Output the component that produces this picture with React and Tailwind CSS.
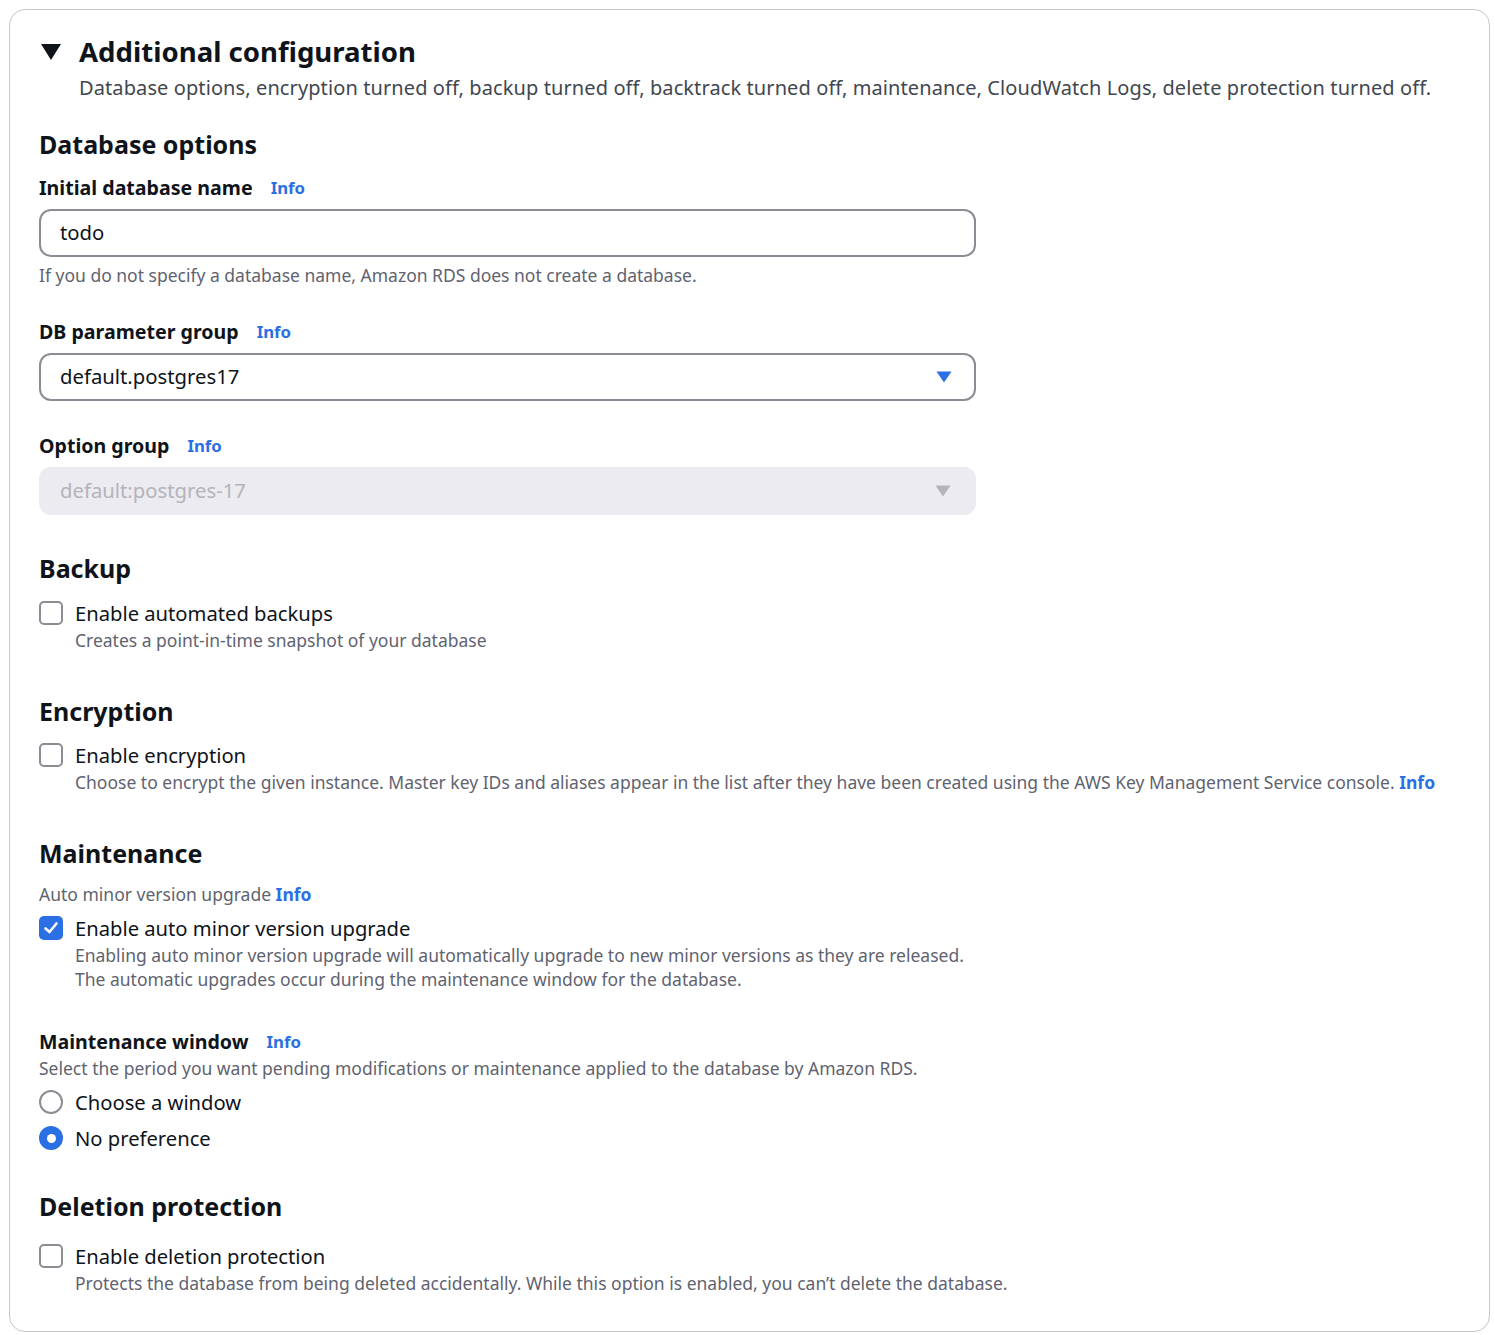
import React from "react";

const F = { fontFamily: '"Noto Sans", "Open Sans", sans-serif' };

function Info() {
  return <span className="text-[#2a6fe3] font-bold text-[16.8px]">Info</span>;
}

function Label({ children, top }) {
  return (
    <div className={`flex items-center gap-[18px] h-[28px] text-[19.6px] font-bold text-[#0f141a] ${top}`}>
      <span>{children}</span>
      <Info />
    </div>
  );
}

function SectionTitle({ children, top }) {
  return <div className={`h-[32px] leading-[32px] text-[25px] font-bold text-[#0f141a] ${top}`}>{children}</div>;
}

function Caret({ color }) {
  return (
    <svg width="16" height="12" viewBox="0 0 16 12">
      <path d="M0.5 0.5 H15.5 L8 11.5 Z" fill={color} />
    </svg>
  );
}

function Checkbox({ checked }) {
  if (checked) {
    return (
      <span className="w-[24px] h-[24px] rounded-[5px] bg-[#2a6fe3] flex items-center justify-center shrink-0">
        <svg width="16" height="14" viewBox="0 0 16 14">
          <path d="M2.5 7.5 L6.5 11 L13.5 2.5" stroke="white" strokeWidth="2.6" fill="none" strokeLinecap="round" strokeLinejoin="round" />
        </svg>
      </span>
    );
  }
  return <span className="w-[24px] h-[24px] rounded-[5px] border-2 border-[#8c8c94] bg-white shrink-0" />;
}

function Radio({ checked }) {
  if (checked) {
    return (
      <span className="w-[24px] h-[24px] rounded-full bg-[#2a6fe3] flex items-center justify-center shrink-0">
        <span className="w-[9px] h-[9px] rounded-full bg-white" />
      </span>
    );
  }
  return <span className="w-[24px] h-[24px] rounded-full border-2 border-[#8c8c94] bg-white shrink-0" />;
}

function CheckRow({ checked, label, top }) {
  return (
    <div className={`flex items-center gap-[12px] h-[28px] ${top}`}>
      <Checkbox checked={checked} />
      <span className="text-[20.2px] text-[#0f141a] leading-[28px]">{label}</span>
    </div>
  );
}

function Desc({ children, top, indent }) {
  return (
    <div className={`text-[17.5px] leading-[24px] text-[#5f6370] ${indent ? "pl-[36px]" : ""} ${top}`}>{children}</div>
  );
}

export default function App() {
  return (
    <div className="bg-white w-[1495px] h-[1335px] pt-[9px] pl-[9px]" style={F}>
      <div className="w-[1481px] h-[1323px] border border-[#c6c6cd] rounded-[16px] pl-[29px] pr-[20px]">
        <div className="flex items-center h-[36px] mt-[23px]">
          <span className="ml-[2px] mr-[18px] mt-[1px]">
            <svg width="20" height="16" viewBox="0 0 20 16">
              <path d="M0 0 H20 L10 16 Z" fill="#0f141a" />
            </svg>
          </span>
          <span className="text-[27.6px] font-bold text-[#0f141a] leading-[36px]">Additional configuration</span>
        </div>
        <div className="pl-[40px] mt-[5px] text-[20px] tracking-[0.1px] leading-[28px] text-[#414750]">
          Database options, encryption turned off, backup turned off, backtrack turned off, maintenance, CloudWatch Logs, delete protection turned off.
        </div>

        <SectionTitle top="mt-[26px]">Database options</SectionTitle>
        <Label top="mt-[14px]">Initial database name</Label>
        <div className="mt-[7px] w-[937px] h-[48px] border-[2.5px] border-[#8c8c94] rounded-[12px] flex items-center pl-[19px] pb-[1px] text-[20.3px] text-[#0f141a]">
          todo
        </div>
        <Desc top="mt-[6px]">If you do not specify a database name, Amazon RDS does not create a database.</Desc>

        <Label top="mt-[31px]">DB parameter group</Label>
        <div className="mt-[7px] w-[937px] h-[48px] border-[2.5px] border-[#8c8c94] rounded-[12px] flex items-center justify-between pl-[19px] pr-[22px] pb-[1px] text-[20.3px] text-[#0f141a]">
          <span>default.postgres17</span>
          <Caret color="#2a6fe3" />
        </div>

        <Label top="mt-[31px]">Option group</Label>
        <div className="mt-[7px] w-[937px] h-[48px] bg-[#ebebf0] rounded-[12px] flex items-center justify-between pl-[21px] pr-[25px] pb-[1px] text-[20.3px] text-[#b4b4bb]">
          <span>default:postgres-17</span>
          <Caret color="#b4b4bb" />
        </div>

        <SectionTitle top="mt-[37px]">Backup</SectionTitle>
        <CheckRow top="mt-[15px]" label="Enable automated backups" />
        <Desc indent top="mt-[1px]">Creates a point-in-time snapshot of your database</Desc>

        <SectionTitle top="mt-[43px]">Encryption</SectionTitle>
        <CheckRow top="mt-[14px]" label="Enable encryption" />
        <Desc indent top="mt-[1px]">
          Choose to encrypt the given instance. Master key IDs and aliases appear in the list after they have been created using the AWS Key Management Service console.{" "}
          <span className="text-[#2a6fe3] font-bold">Info</span>
        </Desc>

        <SectionTitle top="mt-[43px]">Maintenance</SectionTitle>
        <Desc top="mt-[13px]">
          Auto minor version upgrade <span className="text-[#2a6fe3] font-bold">Info</span>
        </Desc>
        <CheckRow checked top="mt-[8px]" label="Enable auto minor version upgrade" />
        <Desc indent top="mt-[1px]">
          Enabling auto minor version upgrade will automatically upgrade to new minor versions as they are released.
          <br />
          The automatic upgrades occur during the maintenance window for the database.
        </Desc>

        <Label top="mt-[37px]">Maintenance window</Label>
        <Desc top="mt-[0px]">Select the period you want pending modifications or maintenance applied to the database by Amazon RDS.</Desc>
        <div className="flex items-center gap-[12px] h-[28px] mt-[8px]">
          <Radio />
          <span className="text-[20.2px] text-[#0f141a]">Choose a window</span>
        </div>
        <div className="flex items-center gap-[12px] h-[28px] mt-[8px]">
          <Radio checked />
          <span className="text-[20.2px] text-[#0f141a]">No preference</span>
        </div>

        <SectionTitle top="mt-[38px]">Deletion protection</SectionTitle>
        <CheckRow top="mt-[20px]" label="Enable deletion protection" />
        <Desc indent top="mt-[1px]">
          Protects the database from being deleted accidentally. While this option is enabled, you can’t delete the database.
        </Desc>
      </div>
    </div>
  );
}
